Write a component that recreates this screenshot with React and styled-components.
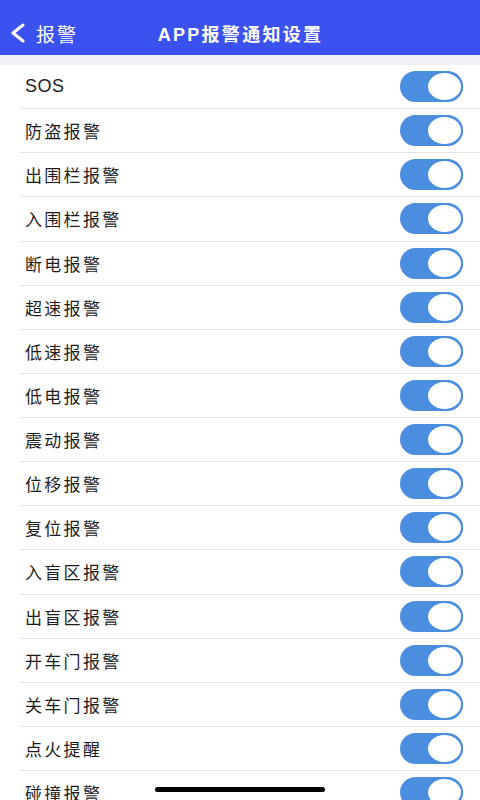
import React, { useState } from 'react';
import styled, { createGlobalStyle } from 'styled-components';

const alarms = [
  'SOS',
  '防盗报警',
  '出围栏报警',
  '入围栏报警',
  '断电报警',
  '超速报警',
  '低速报警',
  '低电报警',
  '震动报警',
  '位移报警',
  '复位报警',
  '入盲区报警',
  '出盲区报警',
  '开车门报警',
  '关车门报警',
  '点火提醒',
  '碰撞报警',
];

const GlobalStyle = createGlobalStyle`
  html, body {
    margin: 0;
    padding: 0;
    height: 800px;
    overflow: hidden;
    background: #ffffff;
    font-family: "Liberation Sans", "Noto Sans CJK SC", sans-serif;
  }
`;

const App = () => {
  const [enabled, setEnabled] = useState(alarms.map(() => true));

  const toggle = (index) => {
    setEnabled((prev) => prev.map((v, i) => (i === index ? !v : v)));
  };

  return (
    <Page>
      <GlobalStyle />
      <Header>
        <BackButton>
          <svg width="16" height="20" viewBox="0 0 16 20">
            <polyline
              points="14,2 4,10 14,18"
              fill="none"
              stroke="#fff"
              strokeWidth="3"
              strokeLinecap="round"
              strokeLinejoin="round"
            />
          </svg>
          <BackText>报警</BackText>
        </BackButton>
        <Title>APP报警通知设置</Title>
      </Header>
      <Spacer />
      <List>
        {alarms.map((name, i) => (
          <Row key={name}>
            <Label $latin={/^[A-Za-z]+$/.test(name)}>{name}</Label>
            <Switch $on={enabled[i]} onClick={() => toggle(i)}>
              <Knob $on={enabled[i]} />
            </Switch>
          </Row>
        ))}
      </List>
      <HomeIndicator />
    </Page>
  );
};

const Page = styled.div`
  width: 480px;
  height: 800px;
  overflow: hidden;
  display: flex;
  flex-direction: column;
`;

const Header = styled.div`
  height: 55px;
  box-sizing: border-box;
  padding-top: 11px;
  background-color: #3b52f1;
  display: flex;
  align-items: center;
  justify-content: center;
  position: relative;
  flex-shrink: 0;
`;

const BackButton = styled.div`
  position: absolute;
  left: 9px;
  top: 11px;
  bottom: 0;
  display: flex;
  align-items: center;
  gap: 11px;
`;

const BackText = styled.span`
  color: #fff;
  font-size: 19px;
  letter-spacing: 2px;
`;

const Title = styled.h1`
  margin: 0 0 0 1px;
  color: #fff;
  font-size: 18px;
  font-weight: bold;
  letter-spacing: 2.3px;
`;

const Spacer = styled.div`
  height: 10px;
  background-color: #efeff4;
  flex-shrink: 0;
`;

const List = styled.div`
  display: flex;
  flex-direction: column;
  padding-left: 20px;
`;

const Row = styled.div`
  height: 44.13px;
  box-sizing: border-box;
  border-bottom: 1px solid #e4e4e6;
  display: flex;
  align-items: center;
  justify-content: space-between;
  padding: 0 17px 0 5px;
  flex-shrink: 0;
`;

const Label = styled.span`
  color: #1c1c1c;
  font-size: ${(p) => (p.$latin ? '18px' : '17px')};
  letter-spacing: ${(p) => (p.$latin ? '0.5px' : '2.3px')};
`;

const Switch = styled.div`
  width: 63px;
  height: 31px;
  border-radius: 16px;
  background-color: ${(p) => (p.$on ? '#4b8ddf' : '#e5e5ea')};
  display: flex;
  align-items: center;
  justify-content: ${(p) => (p.$on ? 'flex-end' : 'flex-start')};
  cursor: pointer;
`;

const Knob = styled.div`
  width: 33px;
  height: 27px;
  border-radius: 50%;
  background-color: #fff;
  border: 2px solid ${(p) => (p.$on ? '#4b8ddf' : '#e5e5ea')};
`;

const HomeIndicator = styled.div`
  position: fixed;
  left: 155px;
  bottom: 8px;
  width: 170px;
  height: 5px;
  border-radius: 3px;
  background-color: #000;
`;

export default App;
